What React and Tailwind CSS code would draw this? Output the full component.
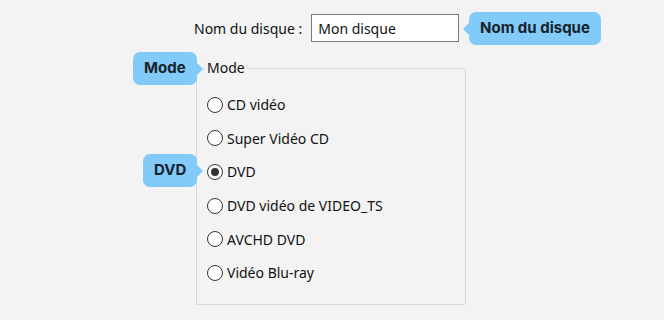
import React from 'react';

const modes = ['CD vidéo', 'Super Vidéo CD', 'DVD', 'DVD vidéo de VIDEO_TS', 'AVCHD DVD', 'Vidéo Blu-ray'];

/**
 * Bulle d'aide bleue avec une pointe
 */
const Bubble = ({ children, side = 'right', className = '' }) => (
    <div className={`absolute flex items-center h-[33px] px-[11px] rounded-[7px] bg-[#82caf8] text-[#17222d] text-[15px] font-bold font-['Inter',sans-serif] ${className}`}>
        {children}
        {side === 'right' ? (
            <span className="absolute right-[-6px] top-1/2 -translate-y-1/2 w-0 h-0 border-y-[6px] border-y-transparent border-l-[6px] border-l-[#82caf8]"></span>
        ) : (
            <span className="absolute left-[-6px] top-1/2 -translate-y-1/2 w-0 h-0 border-y-[6px] border-y-transparent border-r-[6px] border-r-[#82caf8]"></span>
        )}
    </div>
);

const Radio = ({ label, checked }) => (
    <div className="flex items-center h-[33.6px] gap-[4px]">
        <span className="w-[16px] h-[16px] rounded-full border border-[#333] bg-white flex items-center justify-center">
            {checked && <span className="w-[8px] h-[8px] rounded-full bg-[#333]"></span>}
        </span>
        <span>{label}</span>
    </div>
);

const App = () => {
    return (
        <div className="relative w-[664px] h-[320px] bg-[#f3f3f3] text-[14px] text-[#111] font-['Noto_Sans',sans-serif] overflow-hidden">
            <div className="flex items-center pt-[14px] pl-[194px] gap-[9px]">
                <span>Nom du disque :</span>
                <div className="w-[148px] h-[28px] border border-[#7a7a7a] bg-white flex items-center px-[6px]">Mon disque</div>
            </div>

            <div className="relative ml-[196px] mt-[26px] w-[270px] h-[237px] border border-[#d6d6d6] rounded-[2px] pt-[19px] pl-[10px]">
                <span className="absolute left-[8px] top-[-11px] px-[2px] bg-[#f3f3f3] leading-[20px]">Mode</span>
                {modes.map((m) => (
                    <Radio key={m} label={m} checked={m === 'DVD'} />
                ))}
            </div>

            <Bubble side="left" className="left-[469px] top-[12px]">Nom du disque</Bubble>
            <Bubble className="left-[133px] top-[52px]">Mode</Bubble>
            <Bubble className="left-[143px] top-[154px]">DVD</Bubble>
        </div>
    );
};

export default App;
